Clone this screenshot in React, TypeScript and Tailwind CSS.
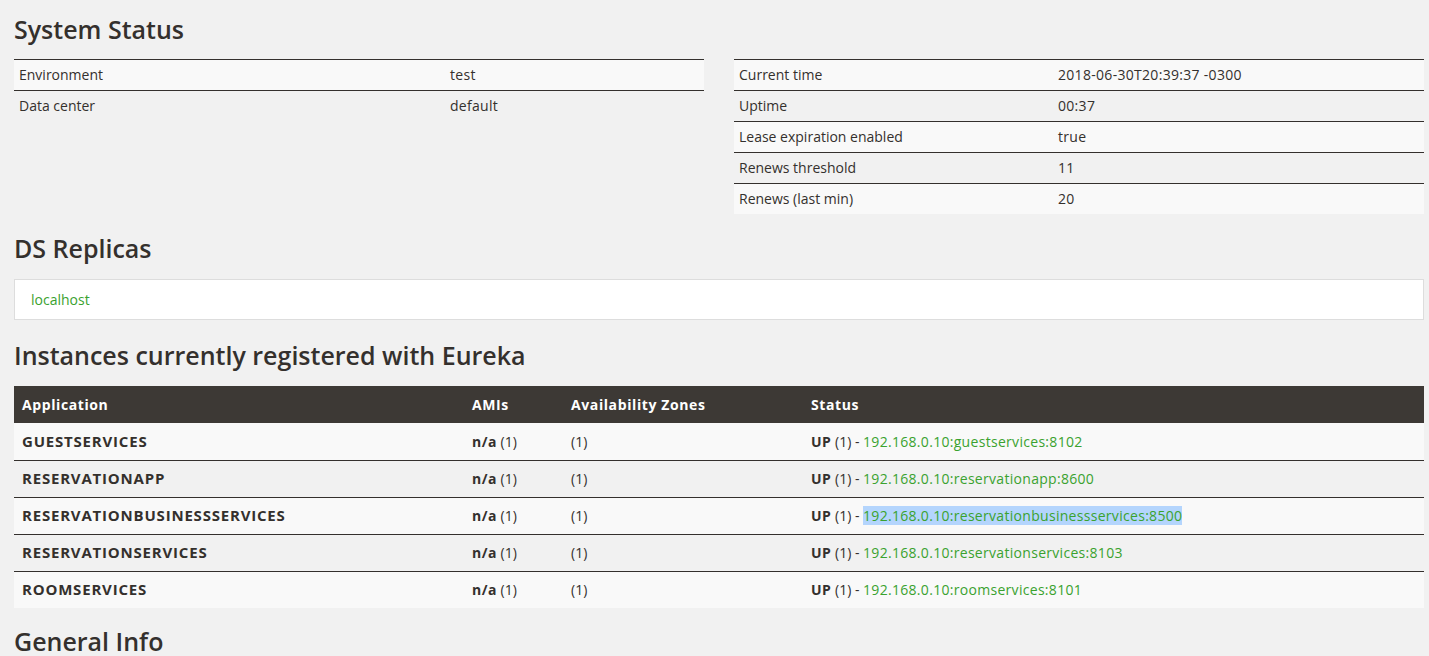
const sysLeft = [
  ['Environment', 'test'],
  ['Data center', 'default'],
];

const sysRight = [
  ['Current time', '2018-06-30T20:39:37 -0300'],
  ['Uptime', '00:37'],
  ['Lease expiration enabled', 'true'],
  ['Renews threshold', '11'],
  ['Renews (last min)', '20'],
];

const instances = [
  { app: 'GUESTSERVICES', url: '192.168.0.10:guestservices:8102' },
  { app: 'RESERVATIONAPP', url: '192.168.0.10:reservationapp:8600' },
  { app: 'RESERVATIONBUSINESSSERVICES', url: '192.168.0.10:reservationbusinessservices:8500', selected: true },
  { app: 'RESERVATIONSERVICES', url: '192.168.0.10:reservationservices:8103' },
  { app: 'ROOMSERVICES', url: '192.168.0.10:roomservices:8101' },
];

function Heading({ children, className = '' }: { children: React.ReactNode; className?: string }) {
  return (
    <h2
      className={`text-[25px] leading-[30px] font-semibold text-[#34302d] ${className}`}
      style={{ fontFamily: '"Open Sans", sans-serif' }}
    >
      {children}
    </h2>
  );
}

function InfoTable({ rows, labelWidth }: { rows: string[][]; labelWidth: string }) {
  return (
    <div className="flex-1">
      {rows.map(([k, v], i) => (
        <div
          key={k}
          className={`flex h-[31px] items-center border-t border-[#34302d] pb-px ${i % 2 === 0 ? 'bg-[#f9f9f9]' : ''}`}
        >
          <div className={`${labelWidth} pl-[5px]`}>{k}</div>
          <div className="pl-[5px] tracking-[0.3px]">{v}</div>
        </div>
      ))}
    </div>
  );
}

export default function App() {
  return (
    <div
      className="min-h-screen bg-[#f1f1f1] pl-[14px] pr-[5px] pt-[14px] text-[14px] text-[#34302d]"
      style={{ fontFamily: '"Open Sans", sans-serif' }}
    >
      <Heading>System Status</Heading>

      <div className="mt-[15px] flex gap-[30px]">
        <InfoTable rows={sysLeft} labelWidth="w-[431px]" />
        <InfoTable rows={sysRight} labelWidth="w-[319px]" />
      </div>

      <Heading className="mt-[19px]">DS Replicas</Heading>

      <div className="mt-[16px] flex h-[41px] items-center border border-[#dddddd] bg-white pl-[16px]">
        <span className="text-[#3aa22f]">localhost</span>
      </div>

      <Heading className="mt-[20px]">Instances currently registered with Eureka</Heading>

      <div className="mt-[16px]">
        <div className="flex h-[37px] items-center bg-[#3d3935] pb-px font-bold tracking-[0.6px] text-white">
          <div className="w-[450px] pl-[8px]">Application</div>
          <div className="w-[99px] pl-[8px]">AMIs</div>
          <div className="w-[240px] pl-[8px]">Availability Zones</div>
          <div className="pl-[8px]">Status</div>
        </div>
        {instances.map((r, i) => (
          <div
            key={r.app}
            className={`flex h-[37px] items-center pb-px ${i > 0 ? 'border-t border-[#34302d]' : ''} ${i % 2 === 0 ? 'bg-[#f9f9f9]' : ''}`}
          >
            <div className="w-[450px] pl-[8px] text-[15px] font-bold tracking-[0.8px]">{r.app}</div>
            <div className="w-[99px] pl-[8px]">
              <b className="tracking-[0.5px]">n/a</b> (1)
            </div>
            <div className="w-[240px] pl-[8px]">(1)</div>
            <div className="pl-[8px]">
              <b className="tracking-[0.5px]">UP</b> (1) -{' '}
              <span className={`tracking-[0.3px] text-[#3aa22f] ${r.selected ? 'bg-[#b4d5fd]' : ''}`}>{r.url}</span>
            </div>
          </div>
        ))}
      </div>

      <Heading className="mt-[18px]">General Info</Heading>
    </div>
  );
}
